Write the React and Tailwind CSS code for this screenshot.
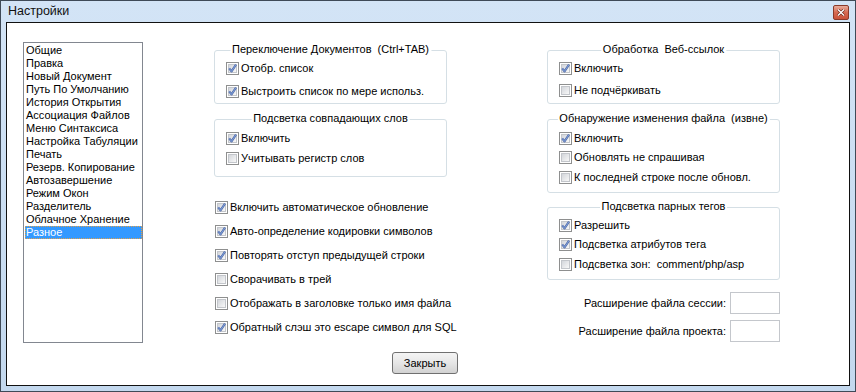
import React from 'react';

const menu = [
  'Общие',
  'Правка',
  'Новый Документ',
  'Путь По Умолчанию',
  'История Открытия',
  'Ассоциация Файлов',
  'Меню Синтаксиса',
  'Настройка Табуляции',
  'Печать',
  'Резерв. Копирование',
  'Автозавершение',
  'Режим Окон',
  'Разделитель',
  'Облачное Хранение',
  'Разное',
];

const misc = [
  ['Включить автоматическое обновление', true],
  ['Авто-определение кодировки символов', true],
  ['Повторять отступ предыдущей строки', true],
  ['Сворачивать в трей', false],
  ['Отображать в заголовке только имя файла', false],
  ['Обратный слэш это escape символ для SQL', true],
];

function Box({ checked }) {
  return (
    <span className="relative flex h-[13px] w-[13px] shrink-0 items-center justify-center border border-[#8e8f8f] bg-white">
      <span className="h-[9px] w-[9px] border border-[#c3c6cb] bg-linear-to-br from-[#d3d6db] to-[#f8f8f8]" />
      {checked && (
        <svg className="absolute left-[-1px] top-[-1px]" width="13" height="13" viewBox="0 0 13 13">
          <path d="M3.2 6.4 L5.5 9.4 L10 2.6" fill="none" stroke="#4d68a6" strokeWidth="2.1" strokeLinejoin="round" />
          <path d="M3.2 6.4 L5.5 9.4 L10 2.6" fill="none" stroke="#8fb0e8" strokeWidth="0.8" strokeLinejoin="round" />
        </svg>
      )}
    </span>
  );
}

function Check({ label, checked, className = '' }) {
  return (
    <label className={`flex h-[14px] items-center gap-[2px] whitespace-pre ${className}`}>
      <Box checked={checked} />
      <span>{label}</span>
    </label>
  );
}

function Group({ title, className = '', children }) {
  return (
    <div className={`relative rounded-[3px] border border-[#d5dfe5] ${className}`}>
      <span className="absolute left-1/2 top-[-8px] -translate-x-1/2 whitespace-pre bg-white px-[2px] leading-[13px]">
        {title}
      </span>
      {children}
    </div>
  );
}

export default function App() {
  return (
    <div className="flex h-[392px] w-[856px] flex-col border border-[#3f4a57] bg-linear-to-b from-[#d3e4f6] to-[#c3d8ee] font-['Liberation_Sans',Arial,sans-serif] text-[11px] leading-[13px] text-black">
      {/* title bar */}
      <div className="flex h-[21px] shrink-0 items-center justify-between pl-[7px] pr-[6px]">
        <span className="text-[12.5px] leading-[15px] text-[#111]">Настройки</span>
        <div className="mt-[2px] flex h-[15px] w-[16px] items-center justify-center rounded-[2px] border border-[#8a3a2a] bg-linear-to-b from-[#e8ab9b] via-[#d66a52] to-[#c9523a]">
          <svg width="8" height="7" viewBox="0 0 8 7">
            <path d="M1 0.5 L7 6.5 M7 0.5 L1 6.5" stroke="#6a2618" strokeWidth="2.6" />
            <path d="M1 0.5 L7 6.5 M7 0.5 L1 6.5" stroke="#fff" strokeWidth="1.4" />
          </svg>
        </div>
      </div>

      {/* client area */}
      <div className="mx-[5px] flex h-[364px] flex-col border border-[#111] bg-white">
        <div className="flex items-start pl-[16px] pt-[19px]">
          {/* category list */}
          <div className="h-[301px] w-[120px] shrink-0 border border-[#828790] pt-[1px]">
            {menu.map((item) => (
              <div
                key={item}
                className={
                  item === 'Разное'
                    ? 'ml-[1px] h-[13px] whitespace-nowrap bg-[#3399ff] pl-[1px] text-white outline-1 -outline-offset-1 outline-dotted outline-[#e0a04a]'
                    : 'ml-[1px] h-[13px] whitespace-nowrap pl-[1px]'
                }
              >
                {item}
              </div>
            ))}
          </div>

          {/* middle column */}
          <div className="ml-[71px] flex w-[233px] shrink-0 flex-col pt-[8px]">
            <Group title="Переключение Документов  (Ctrl+TAB)" className="h-[54px]">
              <div className="flex flex-col gap-[9px] pl-[11px] pt-[10px]">
                <Check label="Отобр. список" checked />
                <Check label="Выстроить список по мере использ." checked />
              </div>
            </Group>
            <Group title="Подсветка совпадающих слов" className="mt-[15px] h-[58px]">
              <div className="flex flex-col gap-[6px] pl-[11px] pt-[11px]">
                <Check label="Включить" checked />
                <Check label="Учитывать регистр слов" />
              </div>
            </Group>
            <div className="mt-[23px] flex flex-col gap-[10.2px] pl-[1px]">
              {misc.map(([label, checked]) => (
                <Check key={label} label={label} checked={checked} />
              ))}
            </div>
          </div>

          {/* right column */}
          <div className="ml-[100px] flex w-[233px] shrink-0 flex-col pt-[8px]">
            <Group title="Обработка  Веб-ссылок" className="h-[54px]">
              <div className="flex flex-col gap-[8px] pl-[11px] pt-[10px]">
                <Check label="Включить" checked />
                <Check label="Не подчёркивать" />
              </div>
            </Group>
            <Group title="Обнаружение изменения файла  (извне)" className="mt-[15px] h-[74px]">
              <div className="flex flex-col gap-[5.5px] pl-[11px] pt-[11px]">
                <Check label="Включить" checked />
                <Check label="Обновлять не спрашивая" />
                <Check label="К последней строке после обновл." />
              </div>
            </Group>
            <Group title="Подсветка парных тегов" className="mt-[14px] h-[73px]">
              <div className="flex flex-col gap-[5.5px] pl-[11px] pt-[10px]">
                <Check label="Разрешить" checked />
                <Check label="Подсветка атрибутов тега" checked />
                <Check label="Подсветка зон:  comment/php/asp" />
              </div>
            </Group>
            <div className="mt-[12px] flex flex-col gap-[6px]">
              <div className="flex items-center justify-end gap-[4px]">
                <span>Расширение файла сессии:</span>
                <div className="h-[22px] w-[50px] border border-[#c4c7cc] bg-white" />
              </div>
              <div className="flex items-center justify-end gap-[4px]">
                <span>Расширение файла проекта:</span>
                <div className="h-[22px] w-[50px] border border-[#c4c7cc] bg-white" />
              </div>
            </div>
          </div>
        </div>

        <div className="mt-[9px] flex pl-[385px]">
          <button className="flex h-[22px] w-[66px] items-center justify-center rounded-[3px] border border-[#707070] bg-linear-to-b from-[#f4f4f4] via-[#e6e6e6] to-[#d2d2d2]">
            Закрыть
          </button>
        </div>
      </div>
    </div>
  );
}
